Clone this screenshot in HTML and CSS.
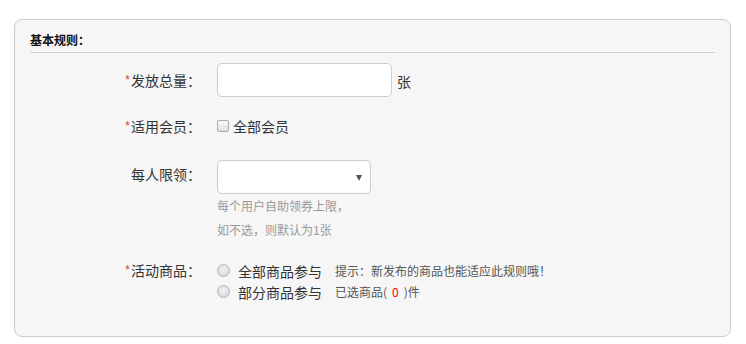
FILE: index.html
```html
<!DOCTYPE html>
<html lang="zh-CN">
<head>
<meta charset="utf-8">
<title>基本规则</title>
<link rel="stylesheet" href="styles.css">
</head>
<body>
<div class="panel">
  <div class="panel-title">基本规则<span class="colon">：</span></div>

  <div class="row row-total">
    <div class="label"><span class="req">*</span>发放总量<span class="colon">：</span></div>
    <div class="field">
      <span class="text-input"></span>
      <span class="unit">张</span>
    </div>
  </div>

  <div class="row row-member">
    <div class="label"><span class="req">*</span>适用会员<span class="colon">：</span></div>
    <div class="field">
      <span class="checkbox"></span>
      <span class="check-text">全部会员</span>
    </div>
  </div>

  <div class="row row-limit">
    <div class="label">每人限领<span class="colon">：</span></div>
    <div class="field-col">
      <span class="select"><span class="arrow"></span></span>
      <div class="hint">每个用户自助领券上限，</div>
      <div class="hint">如不选，则默认为1张</div>
    </div>
  </div>

  <div class="row row-goods">
    <div class="label"><span class="req">*</span>活动商品<span class="colon">：</span></div>
    <div class="field-col">
      <div class="radio-line">
        <span class="radio"></span>
        <span class="radio-text">全部商品参与</span>
        <span class="note">提示<span class="colon">：</span>新发布的商品也能适应此规则哦！</span>
      </div>
      <div class="radio-line">
        <span class="radio"></span>
        <span class="radio-text">部分商品参与</span>
        <span class="note">已选商品(<span class="count">0</span>)件</span>
      </div>
    </div>
  </div>
</div>
</body>
</html>
```

FILE: styles.css
```css
html, body {
  margin: 0;
  padding: 0;
  background: #fff;
}
body {
  font-family: "Noto Sans CJK SC", "Noto Sans", sans-serif;
  color: #333;
  font-size: 14px;
}
.colon {
  font-family: "Noto Sans CJK JP", sans-serif;
}
.panel {
  margin: 19px 0 0 14px;
  border: 1px solid #cccccc;
  border-radius: 8px;
  background: #f6f6f6;
  padding: 0 15px;
  box-sizing: border-box;
  width: 717px;
  height: 318px;
}
.panel-title {
  font-size: 12px;
  font-weight: bold;
  color: #111;
  line-height: 16px;
  padding: 12px 0 4px;
  border-bottom: 1px solid #cfcfcf;
}
.row {
  display: flex;
  align-items: center;
}
.label {
  width: 187px;
  flex: none;
  box-sizing: border-box;
  padding-right: 16px;
  text-align: right;
  font-size: 14px;
  color: #333;
  white-space: nowrap;
}
.req {
  color: #e4393c;
  font-size: 12px;
  font-family: "Liberation Sans", sans-serif;
  margin-right: 1px;
  position: relative;
  top: -2px;
}
.field {
  display: flex;
  align-items: center;
}
.row-total {
  margin-top: 10px;
  height: 34px;
}
.text-input {
  display: block;
  width: 175px;
  height: 34px;
  box-sizing: border-box;
  border: 1px solid #cccccc;
  border-radius: 5px;
  background: #fff;
}
.unit {
  margin-left: 5px;
  margin-top: 2px;
  font-size: 14px;
}
.row-member {
  margin-top: 19px;
  height: 20px;
}
.checkbox {
  display: block;
  width: 12px;
  height: 12px;
  box-sizing: border-box;
  border: 1px solid #a9a9a9;
  border-radius: 2px;
  background: linear-gradient(#fbfbfb, #dedede);
}
.check-text {
  margin-left: 4px;
}
.row-limit {
  margin-top: 24px;
  align-items: flex-start;
}
.row-limit .label {
  line-height: 28px;
}
.field-col {
  display: flex;
  flex-direction: column;
}
.select {
  display: block;
  position: relative;
  width: 154px;
  height: 34px;
  box-sizing: border-box;
  border: 1px solid #cccccc;
  border-radius: 5px;
  background: #fff;
}
.arrow {
  position: absolute;
  right: 8px;
  top: 14px;
  width: 0;
  height: 0;
  border-left: 3.5px solid transparent;
  border-right: 3.5px solid transparent;
  border-top: 6px solid #555;
}
.hint {
  font-size: 12px;
  color: #999;
  line-height: 24px;
}
.row-goods {
  margin-top: 18px;
  align-items: flex-start;
}
.row-goods .label {
  line-height: 21px;
}
.radio-line {
  display: flex;
  align-items: center;
  height: 21px;
}
.radio {
  display: block;
  width: 13px;
  height: 13px;
  box-sizing: border-box;
  border: 1px solid #b5b5b5;
  border-radius: 50%;
  background: radial-gradient(circle at 50% 40%, #f2f2f2, #d2d2d2);
}
.radio-text {
  margin-left: 8px;
  font-size: 14px;
  color: #333;
}
.note {
  margin-left: 13px;
  font-size: 12px;
  color: #555;
}
.count {
  color: #ff0000;
  padding: 0 5px;
}
```
